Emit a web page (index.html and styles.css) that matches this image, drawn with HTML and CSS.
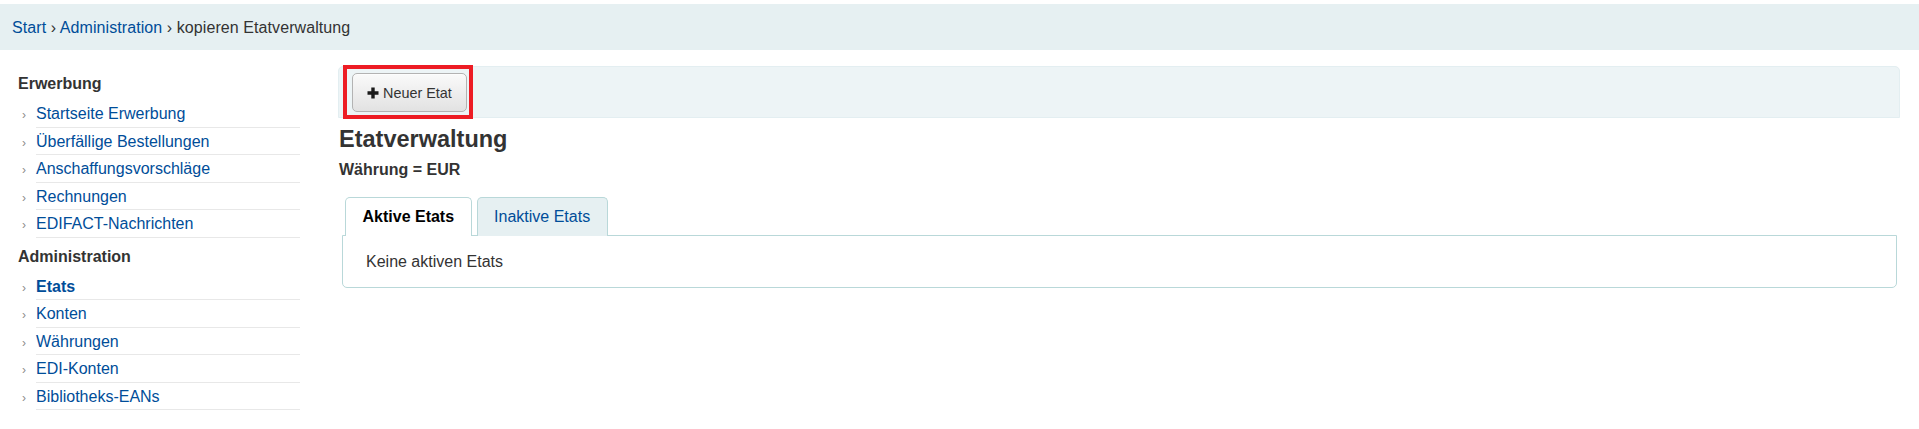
FILE: index.html
```html
<!DOCTYPE html>
<html lang="de">
<head>
<meta charset="utf-8">
<title>Etatverwaltung</title>
<link rel="stylesheet" href="styles.css">
</head>
<body>
<div class="breadcrumbs">
  <a href="#">Start</a> <span class="sep">›</span> <a href="#">Administration</a> <span class="sep">›</span> kopieren Etatverwaltung
</div>
<div class="page">
  <aside class="sidebar">
    <h5 class="nav-head">Erwerbung</h5>
    <ul class="nav-list">
      <li><a href="#">Startseite Erwerbung</a></li>
      <li><a href="#">Überfällige Bestellungen</a></li>
      <li><a href="#">Anschaffungsvorschläge</a></li>
      <li><a href="#">Rechnungen</a></li>
      <li><a href="#">EDIFACT-Nachrichten</a></li>
    </ul>
    <h5 class="nav-head">Administration</h5>
    <ul class="nav-list">
      <li class="current"><a href="#">Etats</a></li>
      <li><a href="#">Konten</a></li>
      <li><a href="#">Währungen</a></li>
      <li><a href="#">EDI-Konten</a></li>
      <li><a href="#">Bibliotheks-EANs</a></li>
    </ul>
  </aside>
  <main class="main">
    <div class="toolbar">
      <span class="highlight">
        <button class="btn" type="button">
          <svg class="icon-plus" width="12" height="12" viewBox="0 0 12 12" aria-hidden="true"><path d="M4.3 0.5h3.4v3.8h3.8v3.4H7.7v3.8H4.3V7.7H0.5V4.3h3.8z" fill="#1a1a1a"/></svg>
          <span>Neuer Etat</span>
        </button>
      </span>
    </div>
    <h1 class="title">Etatverwaltung</h1>
    <h3 class="currency">Währung = EUR</h3>
    <div class="tabs">
      <ul class="tab-list">
        <li class="tab active">Aktive Etats</li>
        <li class="tab"><a href="#">Inaktive Etats</a></li>
      </ul>
      <div class="tab-panel">Keine aktiven Etats</div>
    </div>
  </main>
</div>
</body>
</html>
```

FILE: styles.css
```css
* { box-sizing: border-box; }

body {
  margin: 0;
  font-family: "Liberation Sans", Arial, sans-serif;
  font-size: 16px;
  color: #333;
  background: #fff;
}

a { color: #004d99; text-decoration: none; }

.breadcrumbs {
  margin-top: 4px;
  background: #e6f0f2;
  padding: 15px 12px 13px;
  line-height: 18px;
  color: #333;
  letter-spacing: 0.08px;
}

.page {
  display: flex;
  padding-right: 19px;
}

.sidebar {
  width: 320px;
  flex: none;
  padding: 25px 0 0 18px;
}

.nav-head {
  margin: 0 0 7px;
  font-size: 16px;
  line-height: 18px;
  font-weight: bold;
  color: #333;
}

.nav-list {
  list-style: none;
  margin: 0 0 10px 18px;
  padding: 0;
  width: 264px;
}

.nav-list li {
  display: block;
  padding: 5px 0 3.5px;
  height: 27.5px;
  line-height: 18px;
  border-bottom: 1px solid #e8e8e8;
  white-space: nowrap;
}

.nav-list li::before {
  content: "›";
  display: inline-block;
  box-sizing: border-box;
  font-size: 12px;
  line-height: 10px;
  color: #8c8c8c;
  width: 14px;
  margin-left: -14px;
  padding: 0;
}

.nav-list li.current a { font-weight: bold; }

.main {
  flex: 1;
  margin-left: 18px;
  min-width: 0;
}

.toolbar {
  margin-top: 16px;
  background: #edf4f6;
  border: 1px solid #e3eef1;
  border-radius: 5px 5px 0 0;
  padding: 2px 8px;
  height: 52px;
}

.highlight {
  display: inline-block;
  padding: 4px 2px 3px 5px;
  outline: 4px solid #ed1c24;
}

.btn {
  display: flex;
  align-items: center;
  gap: 4px;
  height: 39px;
  padding: 0 14px;
  font-family: "Liberation Sans", Arial, sans-serif;
  font-size: 14.4px;
  color: #333;
  background: linear-gradient(to bottom, #fafafa, #e2e2e2);
  border: 1px solid #b3b3b3;
  border-radius: 5px;
  box-shadow: inset 0 1px 0 rgba(255,255,255,.6);
}

.icon-plus { display: block; }

.title {
  margin: 8px 0 0 1px;
  font-size: 23.5px;
  line-height: 26px;
  font-weight: bold;
  color: #333;
}

.currency {
  margin: 9px 0 0 1px;
  font-size: 16px;
  line-height: 18px;
  font-weight: bold;
  color: #333;
}

.tabs {
  margin: 18px 3px 0 4px;
}

.tab-list {
  list-style: none;
  margin: 0;
  padding: 0 0 0 3px;
  display: flex;
  gap: 5px;
}

.tab {
  height: 39px;
  padding: 0 16.5px;
  border: 1px solid #b9d8d9;
  border-bottom: 0;
  border-radius: 5px 5px 0 0;
  line-height: 37px;
  background: #e6f0f2;
  margin-bottom: -1px;
  position: relative;
}

.tab.active {
  background: #fff;
  font-weight: bold;
  color: #000;
  z-index: 1;
}

.tab-panel {
  border: 1px solid #b9d8d9;
  border-radius: 0 0 5px 5px;
  padding: 17px 23px 16px;
  line-height: 18.4px;
  color: #333;
}
```
